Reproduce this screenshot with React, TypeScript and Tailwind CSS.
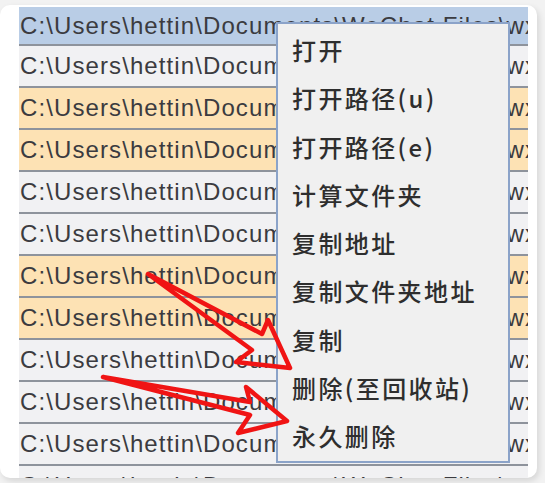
import React from "react";

const ROW_TEXT = "C:\\Users\\hettin\\Documents\\WeChat Files\\wxid_5d8k2j4h1l2c22\\FileStorage";

type RowKind = "sel" | "white" | "orange";
const rows: RowKind[] = [
  "sel",
  "white",
  "orange",
  "orange",
  "white",
  "white",
  "orange",
  "orange",
  "white",
  "white",
  "white",
  "white",
];

const menuItems = [
  "打开",
  "打开路径(u)",
  "打开路径(e)",
  "计算文件夹",
  "复制地址",
  "复制文件夹地址",
  "复制",
  "删除(至回收站)",
  "永久删除",
];

function Row({ kind, first }: { kind: RowKind; first?: boolean }) {
  const bg =
    kind === "sel" ? "bg-[#b9cde6]" : kind === "orange" ? "bg-[#fde2b4]" : "bg-[#f1f1f3]";
  return (
    <div
      className={`${bg} ${first ? "h-[39px]" : "h-[42px]"} shrink-0 border-b-2 border-[#8e939c] flex items-center overflow-hidden whitespace-nowrap pl-[1px] text-[24px] tracking-[1.1px] text-[#3b3b40] font-['Liberation_Sans',Arial,sans-serif]`}
    >
      {ROW_TEXT}
    </div>
  );
}

export default function App() {
  return (
    <div className="relative w-[545px] h-[483px] overflow-hidden bg-[#f2f2f2]">
      <div className="relative mt-[5px] w-[537px] h-[473px] overflow-hidden rounded-[10px] bg-white shadow-[2px_3px_6px_rgba(0,0,0,0.12)] pl-[19px] pt-[2px]">
        <div className="flex w-[509px] flex-col">
          {rows.map((k, i) => (
            <Row key={i} kind={k} first={i === 0} />
          ))}
        </div>

        <div className="absolute left-[276px] top-[17px] flex w-[234px] flex-col border-2 border-[#8ba3c9] bg-[#f0f0f0] pt-[2px] pb-[1px]">
          {menuItems.map((t) => (
            <div
              key={t}
              className="flex h-[48.25px] items-center pl-[14px] text-[24px] font-medium tracking-[2.4px] text-[#2e2e2e] font-['Noto_Sans_CJK_SC','Noto_Sans',sans-serif]"
            >
              {t}
            </div>
          ))}
        </div>
      </div>

      <svg
        className="pointer-events-none absolute inset-0"
        width="545"
        height="483"
        viewBox="0 0 545 483"
      >
        <polygon
          points="148,274 262,334 268,320 290,368 236,362 252,350"
          fill="none"
          stroke="#f01414"
          strokeWidth="4.5"
          strokeLinejoin="round"
        />
        <polygon
          points="103,377 250,402 246,387 287,421 238,433 250,415"
          fill="none"
          stroke="#f01414"
          strokeWidth="4.5"
          strokeLinejoin="round"
        />
      </svg>
    </div>
  );
}
